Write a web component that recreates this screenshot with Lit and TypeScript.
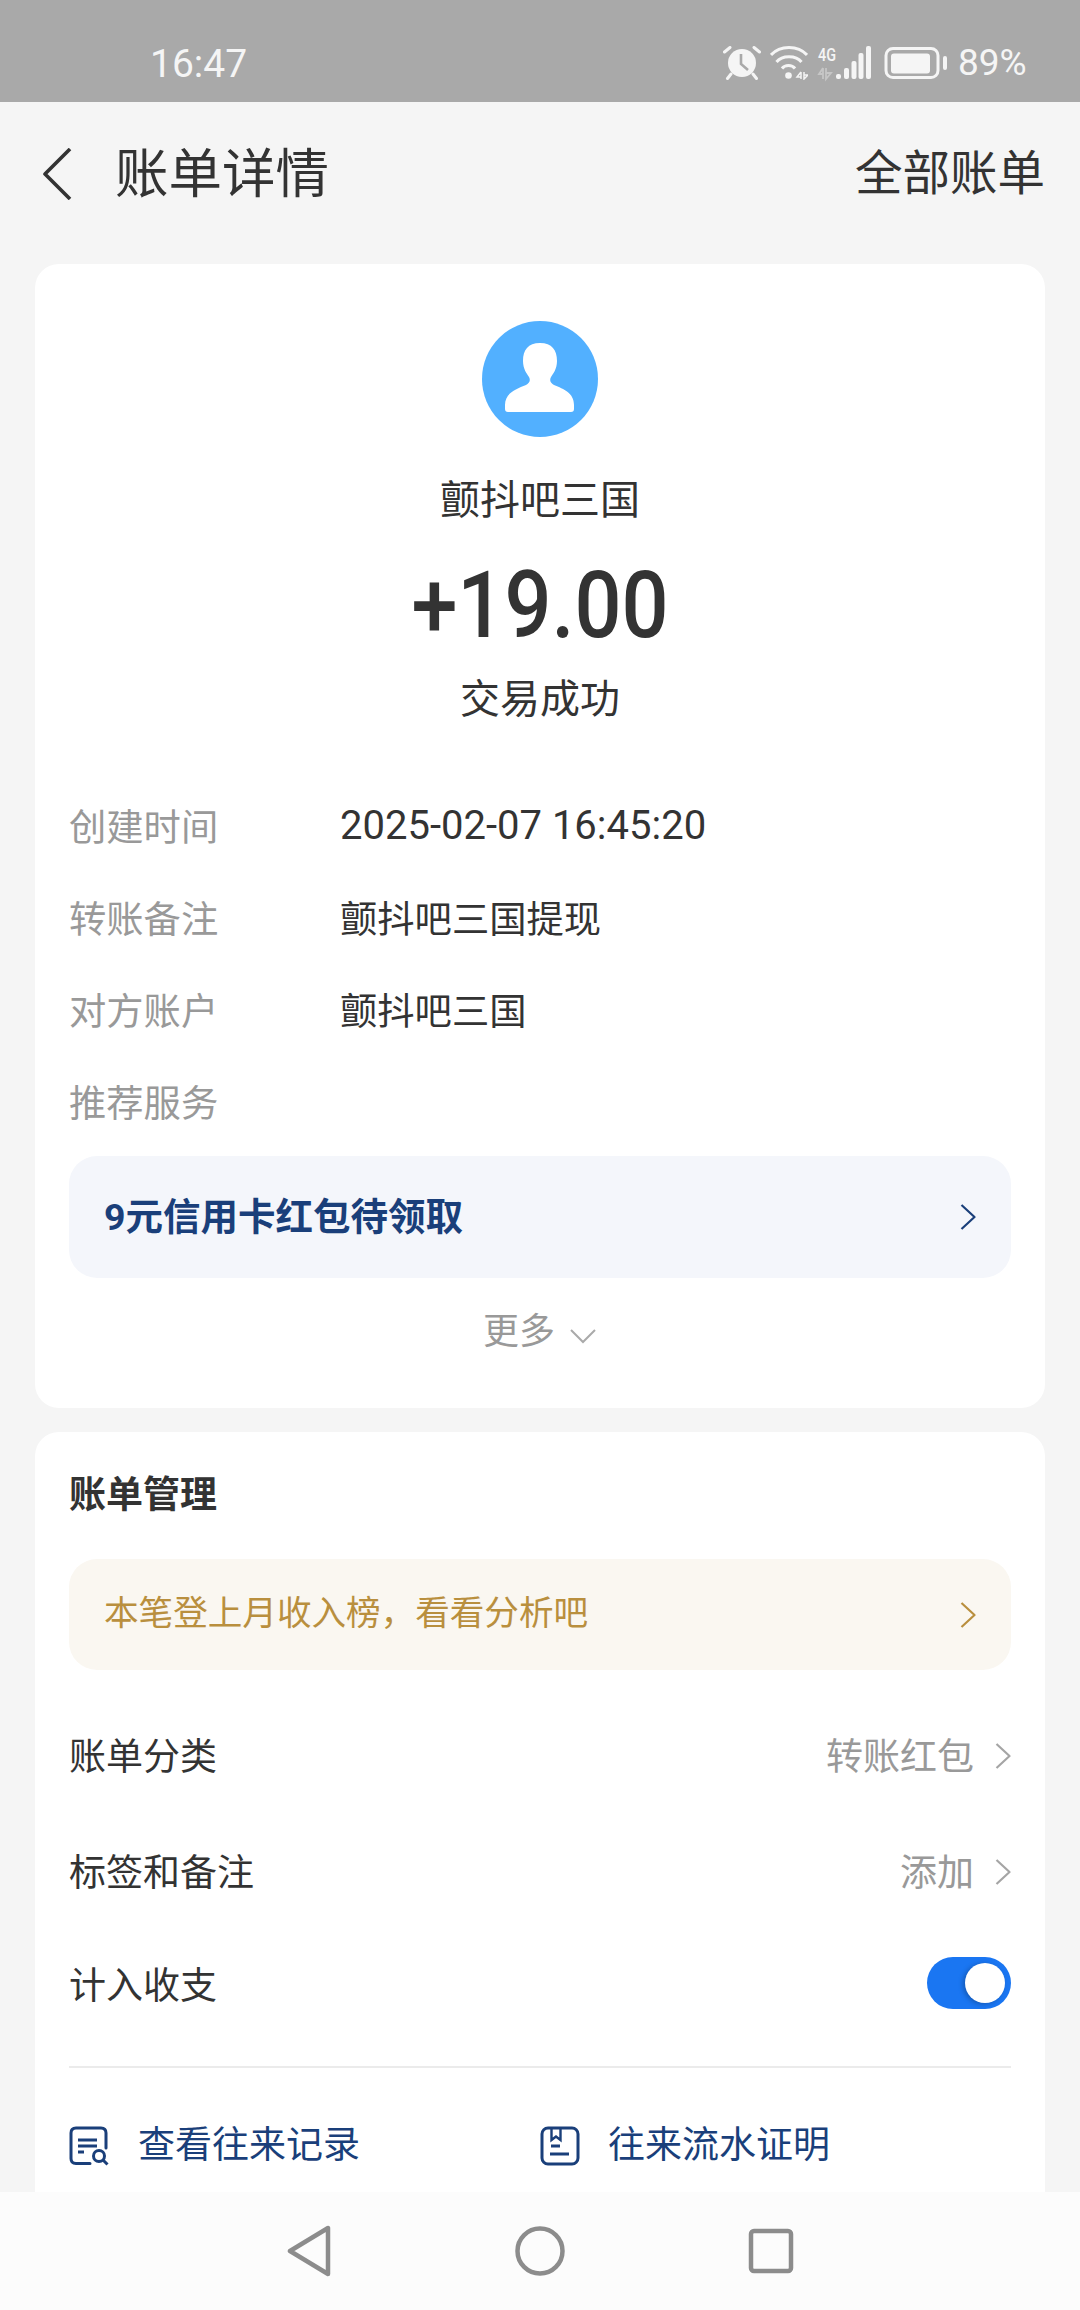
import { LitElement, html, css } from "lit";
import { customElement } from "lit/decorators.js";

const chevron = () => html`<svg class="chev-s" viewBox="0 0 16 26" fill="none" stroke="currentColor" stroke-width="2.200" stroke-linejoin="round"><path d="M1.500 1 L14.500 13 L1.500 25" /></svg>`;

@customElement("app-root")
export class AppRoot extends LitElement {
  static styles = css`
    :host {
      display: flex;
      flex-direction: column;
      width: 1080px;
      height: 2310px;
      overflow: hidden;
      background: #f5f5f5;
      color: #333;
      font-family: Roboto, "Noto Sans CJK SC", sans-serif;
    }
    .status {
      flex: none;
      height: 102px;
      background: #a9a9a9;
      color: #f5f5f5;
      display: flex;
      align-items: center;
      padding: 23px 55px 0 150px;
      box-sizing: border-box;
    }
    .time { font-size: 39px; flex: 1; line-height: 46px; margin-top: 2px; }
    .status svg { display: block; flex: none; }
    .i-wifi { margin-left: 9px; }
    .i-sig { margin-left: 9px; }
    .i-bat { margin-left: 13px; }
    .pct { font-size: 37px; margin-left: 11px; width: 67px; white-space: nowrap; line-height: 46px; }
    .nav {
      flex: none;
      height: 162px;
      display: flex;
      align-items: center;
      padding: 0 35px 16px 42px;
      box-sizing: border-box;
    }
    .back { width: 30px; height: 52px; color: #333; flex: none; margin-top: -3px; }
    .title { font-size: 53.500px; margin-left: 43px; flex: 1; line-height: 1; }
    .all { font-size: 47.500px; line-height: 1; }
    .content { flex: 1; min-height: 0; overflow: hidden; padding: 0 35px; }
    .card { background: #fff; border-radius: 24px; padding: 0 34px; }
    .top { height: 1144px; box-sizing: border-box; display: flex; flex-direction: column; padding-top: 57px; margin-bottom: 24px; }
    .avatar { width: 116px; height: 116px; align-self: center; display: block; }
    .name { font-size: 40px; line-height: 56px; text-align: center; margin-top: 36px; }
    .amount { font-size: 92px; line-height: 108px; font-weight: 500; text-align: center; margin-top: 23px; transform: scaleX(0.9); }
    .state { font-size: 40px; line-height: 56px; text-align: center; margin-top: 12px; }
    .rows { margin-top: 51px; display: flex; flex-direction: column; }
    .row { display: flex; height: 92px; align-items: center; font-size: 37.300px; }
    .label { width: 271px; color: #999; flex: none; }
    .date { font-size: 40px; }
    .promo {
      height: 122px;
      border-radius: 28px;
      background: #f4f6fb;
      margin-top: 9px;
      display: flex;
      align-items: center;
      justify-content: space-between;
      padding: 0 35px;
      color: #1a3f7a;
      font-size: 37.500px;
      font-weight: 700;
    }
    .promo span { position: relative; top: -4px; }
    .chev-s { width: 16px; height: 26px; flex: none; }
    .more { display: flex; justify-content: center; align-items: center; gap: 14px; margin-top: 29px; font-size: 36px; color: #999; line-height: 50px; }
    .chev-d { width: 28px; height: 16px; color: #aaa; margin-top: 8px; }
    .manage { height: 900px; }
    .manage h2 { margin: 0; padding-top: 38px; font-size: 37px; line-height: 52px; font-weight: 700; }
    .tip {
      height: 111px;
      border-radius: 28px;
      background: #faf7f1;
      margin-top: 37px;
      margin-bottom: 27px;
      display: flex;
      align-items: center;
      justify-content: space-between;
      padding: 0 35px;
      color: #b98f3e;
      font-size: 34.600px;
    }
    .tip span { position: relative; top: -5px; }
    .item { display: flex; align-items: center; justify-content: space-between; height: 114px; font-size: 37px; }
    .item + .item { margin-top: 2px; }
    .item + .item + .item { margin-top: -1px; }
    .val { display: flex; align-items: center; gap: 21px; color: #999; }
    .val .chev-s { color: #a5a5a5; margin-top: 3px; }
    .switch {
      width: 84px;
      height: 52px;
      border-radius: 26px;
      background: #1a76f2;
      display: flex;
      align-items: center;
      justify-content: flex-end;
      padding-right: 6px;
      box-sizing: border-box;
    }
    .knob { width: 40px; height: 40px; border-radius: 50%; background: #fff; box-shadow: -2px 1px 5px rgba(0, 0, 0, 0.25); }
    .divider { height: 2px; background: #ebebeb; margin-top: 26px; }
    .links { display: flex; margin-top: 54px; color: #1a3f7a; font-size: 37px; line-height: 48px; }
    .link { display: flex; align-items: center; gap: 29px; width: 471px; }
    .link + .link { gap: 28px; }
    .link svg { width: 40px; height: 40px; flex: none; }
    .sys {
      flex: none;
      height: 118px;
      background: #fcfcfc;
      display: flex;
      align-items: center;
      justify-content: center;
      gap: 179px;
    }
    .sys svg { width: 52px; height: 52px; display: block; }
  `;

  private statusIcons() {
    return html`
      <svg width="38" height="34" viewBox="0 0 38 34">
        <circle cx="19" cy="17" r="14" fill="#f5f5f5" />
        <path d="M18 8 V18 L25 24" fill="none" stroke="#a9a9a9" stroke-width="2.600" />
        <path d="M1.500 6 L7 1.500 M36.500 6 L31 1.500 M8 28 L4.500 32.500 M30 28 L33.500 32.500" stroke="#f5f5f5" stroke-width="3" stroke-linecap="round" />
      </svg>
      <svg class="i-wifi" width="38" height="34" viewBox="0 0 38 34" fill="none" stroke="#f5f5f5" stroke-width="3">
        <path d="M1 9 C10 -1 28 -1 37 9" />
        <path d="M6.500 16 C12 9 26 9 31.500 16" />
        <path d="M12 22.500 C15 18.500 22 18.500 25 22.500" />
        <circle cx="18.500" cy="29.500" r="3.300" fill="#f5f5f5" stroke="none" />
        <path d="M31 26 V33 M31 26 L27 31 H31 M34 26 V33 L38 29 H34" stroke-width="1.500" />
      </svg>
      <svg class="i-sig" width="54" height="40" viewBox="0 -3 54 40" fill="#f5f5f5">
        <text x="1" y="15" font-size="19" font-family="Roboto" font-weight="500" textLength="18" lengthAdjust="spacingAndGlyphs">4G</text>
        <path d="M6 22 V33 M6 22 L2 28 H6 M9 22 V33 L14 27 H9" fill="none" stroke="#c6c6c6" stroke-width="1.800" />
        <rect x="19" y="28" width="5" height="5" rx="2" />
        <rect x="27" y="22" width="5" height="11" rx="2" />
        <rect x="34.500" y="15" width="5" height="18" rx="2" />
        <rect x="41.500" y="7" width="5" height="26" rx="2" />
        <rect x="49" y="0" width="5" height="33" rx="2" />
      </svg>
      <svg class="i-bat" width="63" height="34" viewBox="0 0 63 34">
        <rect x="2" y="2.500" width="52" height="29" rx="7" fill="none" stroke="#f5f5f5" stroke-width="3" />
        <rect x="7" y="7.500" width="39" height="20" rx="3" fill="#f5f5f5" />
        <rect x="59" y="10" width="4" height="14" rx="2" fill="#f5f5f5" />
      </svg>
    `;
  }

  protected render() {
    return html`
      <div class="status">
        <div class="time">16:47</div>
        ${this.statusIcons()}
        <div class="pct">89%</div>
      </div>
      <div class="nav">
        <svg class="back" viewBox="0 0 30 52" fill="none" stroke="currentColor" stroke-width="3.600" stroke-linejoin="round"><path d="M28 1 L3 26 L28 51" /></svg>
        <div class="title">账单详情</div>
        <div class="all">全部账单</div>
      </div>
      <div class="content">
        <section class="card top">
          <svg class="avatar" viewBox="0 0 116 116">
            <circle cx="58" cy="58" r="58" fill="#52b0ff" />
            <path fill="#fff" d="M58 22 C70 22 75 29 75 40 C75 48 71 53 69 56 C67 60 69 62 72 64 C82 68 92 72 92 84 V88 C92 90 91 91 89 91 H26 C24 91 23 90 23 88 V84 C23 72 34 68 44 64 C47 62 49 60 47 56 C45 53 41 48 41 40 C41 29 46 22 58 22 Z" />
          </svg>
          <div class="name">颤抖吧三国</div>
          <div class="amount">+19.00</div>
          <div class="state">交易成功</div>
          <div class="rows">
            <div class="row"><span class="label">创建时间</span><span class="date">2025-02-07 16:45:20</span></div>
            <div class="row"><span class="label">转账备注</span><span>颤抖吧三国提现</span></div>
            <div class="row"><span class="label">对方账户</span><span>颤抖吧三国</span></div>
            <div class="row"><span class="label">推荐服务</span></div>
          </div>
          <div class="promo"><span>9元信用卡红包待领取</span>${chevron()}</div>
          <div class="more"><span>更多</span><svg class="chev-d" viewBox="0 0 28 16" fill="none" stroke="currentColor" stroke-width="2"><path d="M2 2 L14 14 L26 2" /></svg></div>
        </section>
        <section class="card manage">
          <h2>账单管理</h2>
          <div class="tip"><span>本笔登上月收入榜，看看分析吧</span>${chevron()}</div>
          <div class="item"><span>账单分类</span><span class="val">转账红包 ${chevron()}</span></div>
          <div class="item"><span>标签和备注</span><span class="val">添加 ${chevron()}</span></div>
          <div class="item"><span>计入收支</span><div class="switch"><div class="knob"></div></div></div>
          <div class="divider"></div>
          <div class="links">
            <div class="link">
              <svg viewBox="0 0 40 40" fill="none" stroke="currentColor" stroke-width="3"><path d="M21 37.500 H7 Q2 37.500 2 32.500 V7 Q2 2 7 2 H32 Q37 2 37 7 V22" stroke-linecap="round" /><path d="M9 14 H28 M9 20 H28 M9 26 H15" /><circle cx="30" cy="30" r="5.500" /><path d="M34 34 L38.500 38.500" /></svg>
              <span>查看往来记录</span>
            </div>
            <div class="link">
              <svg viewBox="0 0 40 40" fill="none" stroke="currentColor" stroke-width="3"><rect x="2" y="2" width="36" height="36" rx="6" /><path d="M11.500 2 V14 L16 10.500 L20.500 14 V2" stroke-width="2.400" /><path d="M11 20 H20 M10 28 H29" /></svg>
              <span>往来流水证明</span>
            </div>
          </div>
        </section>
      </div>
      <div class="sys">
        <svg viewBox="0 0 52 52" fill="none" stroke="#8c8c8c" stroke-width="4.500" stroke-linejoin="round"><path d="M45 3 V49 L7 26 Z" /></svg>
        <svg viewBox="0 0 52 52" fill="none" stroke="#8c8c8c" stroke-width="4.500"><circle cx="26" cy="26" r="22.500" /></svg>
        <svg viewBox="0 0 52 52" fill="none" stroke="#8c8c8c" stroke-width="4.500" stroke-linejoin="round"><rect x="6" y="6" width="40" height="40" rx="3" /></svg>
      </div>
    `;
  }
}
